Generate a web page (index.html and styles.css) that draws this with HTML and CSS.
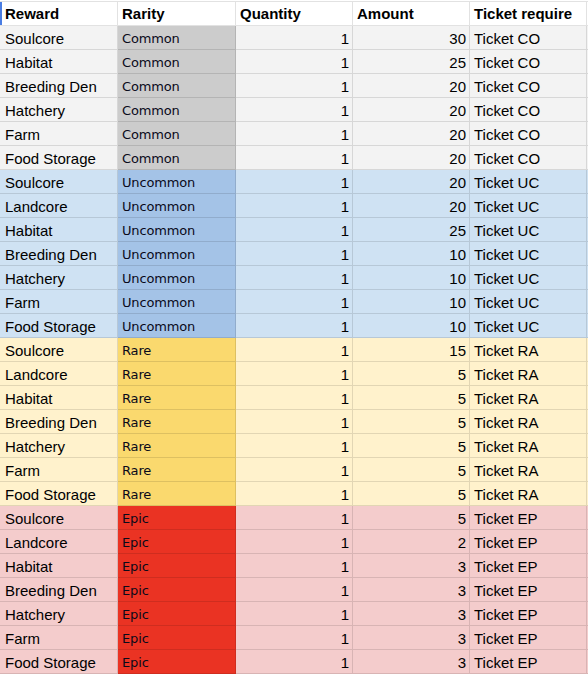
FILE: index.html
```html
<!DOCTYPE html>
<html>
<head>
<meta charset="utf-8">
<link rel="stylesheet" href="styles.css">
</head>
<body>
<table class="sheet">
  <colgroup>
    <col class="c1"><col class="c2"><col class="c3"><col class="c4"><col class="c5"><col class="c6">
  </colgroup>
  <thead>
    <tr class="head">
      <th class="first">Reward</th><th>Rarity</th><th>Quantity</th><th>Amount</th><th>Ticket require</th><th class="pad"></th>
    </tr>
  </thead>
  <tbody>
    <tr class="common"><td class="first">Soulcore</td><td class="rarity">Common</td><td class="num">1</td><td class="num">30</td><td>Ticket CO</td><td class="pad"></td></tr>
    <tr class="common"><td class="first">Habitat</td><td class="rarity">Common</td><td class="num">1</td><td class="num">25</td><td>Ticket CO</td><td class="pad"></td></tr>
    <tr class="common"><td class="first">Breeding Den</td><td class="rarity">Common</td><td class="num">1</td><td class="num">20</td><td>Ticket CO</td><td class="pad"></td></tr>
    <tr class="common"><td class="first">Hatchery</td><td class="rarity">Common</td><td class="num">1</td><td class="num">20</td><td>Ticket CO</td><td class="pad"></td></tr>
    <tr class="common"><td class="first">Farm</td><td class="rarity">Common</td><td class="num">1</td><td class="num">20</td><td>Ticket CO</td><td class="pad"></td></tr>
    <tr class="common"><td class="first">Food Storage</td><td class="rarity">Common</td><td class="num">1</td><td class="num">20</td><td>Ticket CO</td><td class="pad"></td></tr>

    <tr class="uncommon"><td class="first">Soulcore</td><td class="rarity">Uncommon</td><td class="num">1</td><td class="num">20</td><td>Ticket UC</td><td class="pad"></td></tr>
    <tr class="uncommon"><td class="first">Landcore</td><td class="rarity">Uncommon</td><td class="num">1</td><td class="num">20</td><td>Ticket UC</td><td class="pad"></td></tr>
    <tr class="uncommon"><td class="first">Habitat</td><td class="rarity">Uncommon</td><td class="num">1</td><td class="num">25</td><td>Ticket UC</td><td class="pad"></td></tr>
    <tr class="uncommon"><td class="first">Breeding Den</td><td class="rarity">Uncommon</td><td class="num">1</td><td class="num">10</td><td>Ticket UC</td><td class="pad"></td></tr>
    <tr class="uncommon"><td class="first">Hatchery</td><td class="rarity">Uncommon</td><td class="num">1</td><td class="num">10</td><td>Ticket UC</td><td class="pad"></td></tr>
    <tr class="uncommon"><td class="first">Farm</td><td class="rarity">Uncommon</td><td class="num">1</td><td class="num">10</td><td>Ticket UC</td><td class="pad"></td></tr>
    <tr class="uncommon"><td class="first">Food Storage</td><td class="rarity">Uncommon</td><td class="num">1</td><td class="num">10</td><td>Ticket UC</td><td class="pad"></td></tr>

    <tr class="rare"><td class="first">Soulcore</td><td class="rarity">Rare</td><td class="num">1</td><td class="num">15</td><td>Ticket RA</td><td class="pad"></td></tr>
    <tr class="rare"><td class="first">Landcore</td><td class="rarity">Rare</td><td class="num">1</td><td class="num">5</td><td>Ticket RA</td><td class="pad"></td></tr>
    <tr class="rare"><td class="first">Habitat</td><td class="rarity">Rare</td><td class="num">1</td><td class="num">5</td><td>Ticket RA</td><td class="pad"></td></tr>
    <tr class="rare"><td class="first">Breeding Den</td><td class="rarity">Rare</td><td class="num">1</td><td class="num">5</td><td>Ticket RA</td><td class="pad"></td></tr>
    <tr class="rare"><td class="first">Hatchery</td><td class="rarity">Rare</td><td class="num">1</td><td class="num">5</td><td>Ticket RA</td><td class="pad"></td></tr>
    <tr class="rare"><td class="first">Farm</td><td class="rarity">Rare</td><td class="num">1</td><td class="num">5</td><td>Ticket RA</td><td class="pad"></td></tr>
    <tr class="rare"><td class="first">Food Storage</td><td class="rarity">Rare</td><td class="num">1</td><td class="num">5</td><td>Ticket RA</td><td class="pad"></td></tr>

    <tr class="epic"><td class="first">Soulcore</td><td class="rarity">Epic</td><td class="num">1</td><td class="num">5</td><td>Ticket EP</td><td class="pad"></td></tr>
    <tr class="epic"><td class="first">Landcore</td><td class="rarity">Epic</td><td class="num">1</td><td class="num">2</td><td>Ticket EP</td><td class="pad"></td></tr>
    <tr class="epic"><td class="first">Habitat</td><td class="rarity">Epic</td><td class="num">1</td><td class="num">3</td><td>Ticket EP</td><td class="pad"></td></tr>
    <tr class="epic"><td class="first">Breeding Den</td><td class="rarity">Epic</td><td class="num">1</td><td class="num">3</td><td>Ticket EP</td><td class="pad"></td></tr>
    <tr class="epic"><td class="first">Hatchery</td><td class="rarity">Epic</td><td class="num">1</td><td class="num">3</td><td>Ticket EP</td><td class="pad"></td></tr>
    <tr class="epic"><td class="first">Farm</td><td class="rarity">Epic</td><td class="num">1</td><td class="num">3</td><td>Ticket EP</td><td class="pad"></td></tr>
    <tr class="epic"><td class="first">Food Storage</td><td class="rarity">Epic</td><td class="num">1</td><td class="num">3</td><td>Ticket EP</td><td class="pad"></td></tr>
  </tbody>
</table>
</body>
</html>
```
FILE: styles.css
```css
html, body {
  margin: 0;
  padding: 0;
  background: #ffffff;
}

.sheet {
  margin-top: 1px;
  width: 588px;
  table-layout: fixed;
  border-collapse: separate;
  border-spacing: 0;
  font-family: "Liberation Sans", Arial, sans-serif;
  font-size: 15px;
  color: #000;
}

.c1 { width: 118px; }
.c2 { width: 118px; }
.c3 { width: 117px; }
.c4 { width: 117px; }
.c5 { width: 117px; }
.c6 { width: 1px; }

.sheet th,
.sheet td {
  box-sizing: border-box;
  padding: 0 3px 2px 4px;
  line-height: 17px;
  vertical-align: bottom;
  text-align: left;
  white-space: nowrap;
  overflow: hidden;
  border-right: 1px solid rgba(0, 0, 0, 0.115);
  border-bottom: 1px solid rgba(0, 0, 0, 0.115);
}

.sheet th {
  height: 25px;
  font-weight: bold;
  background: #ffffff;
  border-top: 1px solid rgba(0, 0, 0, 0.115);
  padding-bottom: 3px;
}

.sheet td {
  height: 24px;
}

.sheet th.first {
  box-shadow: inset 2px 0 0 #4a7de3;
}

.sheet .first {
  padding-left: 5px;
}

.sheet .pad {
  padding: 0;
  border-right: none;
}

.sheet td.num {
  text-align: right;
}

.sheet td.rarity {
  font-family: "DejaVu Sans", Verdana, sans-serif;
  font-size: 13px;
  letter-spacing: -0.15px;
  color: #0a0a1a;
  padding-bottom: 2px;
}

.common { background: #f3f3f3; }
.common td.rarity { background: #cccccc; }

.uncommon { background: #cfe2f3; }
.uncommon td.rarity { background: #a4c3e7; }

.rare { background: #fff2cc; }
.rare td.rarity { background: #fad96e; }

.epic { background: #f4cccc; }
.epic td.rarity { background: #ea3323; }
```
